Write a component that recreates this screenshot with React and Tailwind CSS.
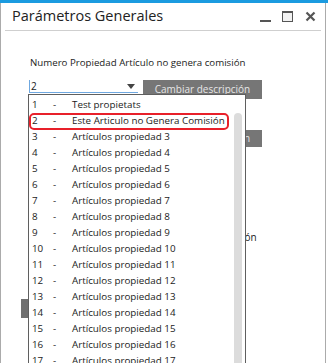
import React from "react"

const items = [
  "Test propietats",
  "Este Articulo no Genera Comisión",
  ...Array.from({ length: 15 }, (_, i) => `Artículos propiedad ${i + 3}`),
]

const font = { fontFamily: '"Open Sans", "Noto Sans", sans-serif' }

const App = () => {
  return (
    <div className="relative w-[330px] h-[363px] overflow-hidden bg-white text-[#1b1b1b]" style={font}>
      <div className="h-[3px] w-[328px] bg-[#1b9be0]" />
      <div className="w-[326px] h-[360px] border-x border-[#ababab] flex flex-col">
        {/* title bar */}
        <div className="h-[27px] flex items-center pl-[11px] pr-[8px]">
          <span className="text-[14.5px] leading-none text-[#222]">Parámetros Generales</span>
          <div className="ml-auto flex items-center gap-[11px]">
            <div className="w-[11px] h-[2px] bg-[#555] mt-[9px]" />
            <div className="w-[11px] h-[11px] border border-[#555] border-t-2 bg-[#f2f2f2]" />
            <svg width="11" height="11" viewBox="0 0 11 11" className="mx-[1px]">
              <path d="M1.5 1.5 L9.5 9.5 M9.5 1.5 L1.5 9.5" stroke="#555" strokeWidth="2.2" />
            </svg>
          </div>
        </div>
        <div className="mx-[4px] h-px bg-[#cfcfcf]" />

        {/* form */}
        <div className="pl-[29px] pt-[25px] flex flex-col">
          <p className="text-[9.7px] leading-[14px] text-[#222]">Numero Propiedad Artículo no genera comisión</p>
          <div className="mt-[10px] -ml-px flex items-start gap-[5px]">
            <div className="w-[109px] h-[13px] border-l border-b border-[#6fa8e0] flex items-center pl-[1px] pr-[3px] text-[10px] leading-none">
              <span>2</span>
              <svg width="8" height="5" viewBox="0 0 8 5" className="ml-auto">
                <path d="M0 0 H8 L4 5 Z" fill="#444" />
              </svg>
            </div>
            <div className="w-[119px] h-[19px] bg-[#767676] text-[#e6e6e6] text-[10px] flex items-center justify-center">
              Cambiar descripción
            </div>
          </div>
          <div className="mt-[31px] ml-[113px] w-[119px] h-[17px] bg-[#767676] text-[#e6e6e6] text-[10px] flex items-center justify-center">
            Cambiar descripción
          </div>
          <div className="mt-[83px] ml-[172px] text-[10px] leading-[14px]">Descripción</div>
          <div className="mt-[55px] -ml-[9px] w-[80px] h-[19px] bg-[#707070]" />
        </div>
      </div>

      {/* open dropdown list */}
      <div className="absolute left-[28px] top-[94px] w-[218px] h-[280px] bg-white border border-[#5f5f5f] pt-[2px]">
        {items.map((t, i) => (
          <div key={i} className="h-[16px] flex items-center text-[9.8px] leading-none">
            <span className="w-[24px] pl-[3px]">{i + 1}</span>
            <span className="w-[19px]">-</span>
            <span>{t}</span>
          </div>
        ))}
        <div className="absolute left-0 top-[18px] w-[200px] h-[17px] rounded-[5px] border-2 border-[#e8202a]" />
        <div className="absolute left-[205px] top-[18px] w-[8px] h-[270px] rounded-t-[4px] bg-[#dcdcdc]" />
      </div>
    </div>
  )
}

export default App
